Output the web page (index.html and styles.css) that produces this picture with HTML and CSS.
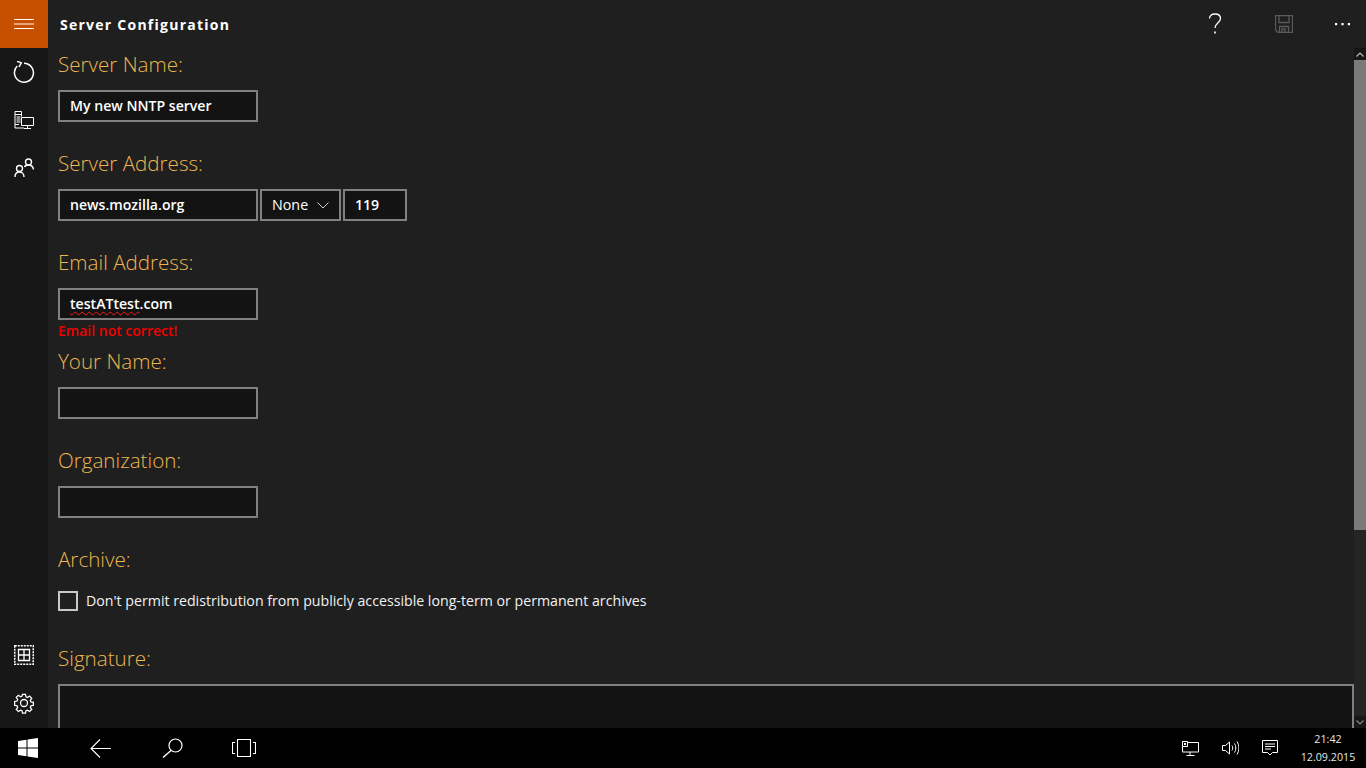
FILE: index.html
```html
<!DOCTYPE html>
<html lang="en">
<head>
<meta charset="utf-8">
<title>Server Configuration</title>
<link rel="stylesheet" href="styles.css">
</head>
<body>
<div class="app">
  <nav class="rail">
    <div class="menu-btn">
      <svg class="ico" width="20" height="12" viewBox="0 0 20 12"><path d="M0 1.500h20M0 6h20M0 10.500h20" stroke="#fff" fill="none"/></svg>
    </div>
    <div class="rail-btn">
      <svg class="ico" width="22" height="22" viewBox="0 0 22 22"><path d="M11 2.200A9.500 9.500 0 1 1 4.200 5M4 .3L8.300 1.800 6 6" stroke="#fff" stroke-width="1.500" fill="none"/></svg>
    </div>
    <div class="rail-btn">
      <svg class="ico" width="20" height="18" viewBox="0 0 20 18"><path d="M1 .5h6.500M1 .5v16.500h9M7.500 .5v5M1 3.500h6.500M1 13.500h4M7.500 6.500h12v8h-12zM13.500 14.500v2.500M10 17.500h7" stroke="#fff" fill="none"/><path d="M2.500 5h4v7h-4z" fill="#fff" opacity=".5"/></svg>
    </div>
    <div class="rail-btn">
      <svg class="ico" width="20" height="20" viewBox="0 0 20 20"><circle cx="14.500" cy="4" r="3" stroke="#fff" stroke-width="1.400" fill="none"/><circle cx="5.500" cy="10.500" r="3" stroke="#fff" stroke-width="1.400" fill="none"/><path d="M1 19c0-3 1.800-5 4.500-5s4.500 2 4.500 5M10.500 9c.6-1.500 2-2 4-2 2.500 0 4.500 1.500 5 4.500" stroke="#fff" stroke-width="1.400" fill="none"/></svg>
    </div>
    <div class="rail-spacer"></div>
    <div class="rail-btn rail-btn-up">
      <svg class="ico" width="20" height="20" viewBox="0 0 20 20"><rect x=".75" y=".75" width="18.500" height="18.500" stroke="#fff" stroke-width="1.500" stroke-dasharray="2 1" fill="none"/><path d="M4.500 4.500h11v11h-11zM10 4.500v11M4.500 10h11" stroke="#fff" stroke-width="1.300" fill="none"/></svg>
    </div>
    <div class="rail-btn rail-btn-up">
      <svg class="ico" width="22" height="22" viewBox="0 0 22 22"><path d="M9.300 1.500h3.400l.5 2.700 1.700.7 2.300-1.600 2.400 2.400-1.600 2.300.7 1.700 2.700.5v3.400l-2.700.5-.7 1.700 1.600 2.300-2.400 2.400-2.300-1.600-1.700.7-.5 2.700H9.300l-.5-2.700-1.700-.7-2.300 1.600-2.400-2.400 1.600-2.300-.7-1.700-2.700-.5V9.300l2.700-.5.7-1.700L2.400 4.800l2.400-2.400 2.300 1.600 1.700-.7z" transform="translate(1.100 1.100) scale(.9)" stroke="#fff" stroke-width="1.400" fill="none"/><circle cx="11" cy="11" r="3.500" stroke="#fff" stroke-width="1.300" fill="none"/></svg>
    </div>
  </nav>

  <div class="page">
    <header class="titlebar">
      <h1 class="title">Server Configuration</h1>
      <div class="actions">
        <span class="action-btn help">
          <svg class="ico" width="14" height="22" viewBox="0 0 14 22"><path d="M1.500 5.500C1.500 3 3.500 1 7 1s5.500 2 5.500 4.500c0 4-5.500 4.500-5.500 9.500" stroke="#fff" stroke-width="1.300" fill="none"/><path d="M6.200 18.500h1.600v2H6.200z" fill="#fff"/></svg>
        </span>
        <span class="action-btn save">
          <svg class="ico" width="18" height="18" viewBox="0 0 18 18"><path d="M.5.500h17v17H3L.5 15zM4 .5v7h10v-7M4.500 17.500v-6h9v6M7 17.500v-3.500h3v3.500" stroke="#5a5a5a" stroke-width="1.300" fill="none"/></svg>
        </span>
        <span class="action-btn more">
          <svg class="ico" width="15" height="3" viewBox="0 0 15 3"><path d="M0 0h2.200v2.200H0zM6.400 0h2.200v2.200H6.400zM12.800 0H15v2.200h-2.200z" fill="#fff"/></svg>
        </span>
      </div>
    </header>

    <div class="body">
      <main class="form">
        <section class="field">
          <h2 class="label">Server Name:</h2>
          <div class="input wide">My new NNTP server</div>
        </section>
        <section class="field">
          <h2 class="label">Server Address:</h2>
          <div class="row">
            <div class="input wide">news.mozilla.org</div>
            <div class="select">None
              <svg class="ico" width="12" height="7" viewBox="0 0 12 7"><path d="M.5.500L6 6 11.500.500" stroke="#ccc" fill="none"/></svg>
            </div>
            <div class="input port">119</div>
          </div>
        </section>
        <section class="field">
          <h2 class="label">Email Address:</h2>
          <div class="input wide"><span class="misspelt">testATtest</span>.com</div>
          <p class="error">Email not correct!</p>
        </section>
        <section class="field">
          <h2 class="label">Your Name:</h2>
          <div class="input wide"></div>
        </section>
        <section class="field">
          <h2 class="label">Organization:</h2>
          <div class="input wide"></div>
        </section>
        <section class="field">
          <h2 class="label">Archive:</h2>
          <div class="check-row">
            <span class="checkbox"></span>
            <span class="check-text">Don't permit redistribution from publicly accessible long-term or permanent archives</span>
          </div>
        </section>
        <section class="field">
          <h2 class="label">Signature:</h2>
          <div class="textarea"></div>
        </section>
      </main>
      <div class="scrollbar">
        <div class="arrow"><svg class="ico" width="8" height="5" viewBox="0 0 8 5"><path d="M.5 4.500L4 1l3.500 3.500" stroke="#bbb" stroke-width="1.200" fill="none"/></svg></div>
        <div class="thumb"></div>
        <div class="track"></div>
        <div class="arrow"><svg class="ico" width="8" height="5" viewBox="0 0 8 5"><path d="M.5.500L4 4 7.500.500" stroke="#888" stroke-width="1.200" fill="none"/></svg></div>
      </div>
    </div>
  </div>
</div>

<footer class="taskbar">
  <div class="task-left">
    <span class="task-btn">
      <svg class="ico" width="20" height="20" viewBox="0 0 20 20"><path d="M0 3l8.500-1.300v7.800H0zM9.500 1.500L20 0v9.500H9.500zM0 10.500h8.500v7.800L0 17zM9.500 10.500H20V20L9.500 18.500z" fill="#fff"/></svg>
    </span>
    <span class="task-btn">
      <svg class="ico" width="21" height="19" viewBox="0 0 21 19"><path d="M10 .5L1 9.500l9 9M1 9.500h20" stroke="#fff" stroke-width="1.100" fill="none"/></svg>
    </span>
    <span class="task-btn">
      <svg class="ico" width="21" height="20" viewBox="0 0 21 20"><circle cx="13.500" cy="7.500" r="6.500" stroke="#fff" stroke-width="1.200" fill="none"/><path d="M9 12.500L1 19.500" stroke="#fff" stroke-width="1.400" fill="none"/></svg>
    </span>
    <span class="task-btn">
      <svg class="ico" width="24" height="18" viewBox="0 0 24 18"><path d="M5.500.500h13v17h-13zM3 3.500H.5v11H3M21 3.500h2.500v11H21" stroke="#fff" stroke-width="1.100" fill="none"/></svg>
    </span>
  </div>
  <div class="task-right">
    <span class="tray-btn">
      <svg class="ico" width="17" height="15" viewBox="0 0 17 15"><path d="M4.500 1.500h12v9.500h-16V6M8 11v3M4.500 14.500h8" stroke="#fff" fill="none"/><path d="M.5.500h5v5h-5z" stroke="#fff" fill="#000"/><path d="M2 2h2v2H2z" fill="#fff"/></svg>
    </span>
    <span class="tray-btn">
      <svg class="ico" width="17" height="14" viewBox="0 0 17 14"><path d="M.5 4.500h3l4-3.500v12l-4-3.500h-3zM10 4.500c1 1.500 1 3.500 0 5M12.500 2.500c1.800 2.500 1.800 6.500 0 9M15 .5c2.500 4 2.500 9 0 13" stroke="#fff" fill="none"/></svg>
    </span>
    <span class="tray-btn">
      <svg class="ico" width="16" height="16" viewBox="0 0 16 16"><path d="M.5.500h15v12h-5L8 15l-2.500-2.500h-5zM3 4h10M3 6.500h10M3 9h6" stroke="#fff" fill="none"/></svg>
    </span>
    <div class="clock"><span>21:42</span><span>12.09.2015</span></div>
  </div>
</footer>
</body>
</html>
```
FILE: styles.css
```css
* { box-sizing: border-box; }
html, body { margin: 0; padding: 0; height: 768px; overflow: hidden; background: #000; }
body { font-family: "Open Sans", "Noto Sans", sans-serif; color: #fff; display: flex; flex-direction: column; }
.ico { display: block; flex: none; }

.app { display: flex; height: 728px; background: #1f1f1f; }

.rail { width: 48px; flex: none; background: #171717; display: flex; flex-direction: column; }
.menu-btn { height: 48px; background: #c75000; display: flex; align-items: center; justify-content: center; }
.rail-btn { height: 48px; display: flex; align-items: center; justify-content: center; }
.rail-btn-up { padding-bottom: 2px; }
.rail-spacer { flex: 1; }

.page { flex: 1; min-width: 0; display: flex; flex-direction: column; }
.titlebar { height: 48px; flex: none; display: flex; align-items: center; justify-content: space-between; padding-left: 12px; }
.title { margin: 0; font-size: 14px; font-weight: 700; letter-spacing: 1.25px; }
.actions { display: flex; }
.action-btn { height: 48px; display: flex; align-items: center; justify-content: center; }
.help { width: 70px; }
.save { width: 68px; }
.more { width: 48px; }

.body { flex: 1; min-height: 0; display: flex; }
.form { flex: 1; min-width: 0; padding-left: 10px; overflow: hidden; }
.field { height: 99px; }
.label { margin: 0; height: 42px; font-size: 20.600px; line-height: 33px; font-weight: 300; color: #edb650; }

.row { display: flex; gap: 2px; }
.input, .select, .textarea { height: 32px; border: 2px solid #808080; background: #131313; }
.input { padding-left: 10px; font-size: 14.100px; font-weight: 600; line-height: 28px; }
.wide { width: 200px; }
.port { width: 64px; }
.select { width: 81px; padding: 0 10px; font-size: 14.300px; line-height: 28px; display: flex; align-items: center; justify-content: space-between; }
.misspelt { text-decoration: underline wavy #ff1a1a 1.200px; text-underline-offset: 2px; }
.error { margin: 0; height: 22px; font-size: 14px; line-height: 21px; font-weight: 600; color: #f00000; }

.check-row { display: flex; align-items: center; gap: 8px; padding-top: 6px; }
.checkbox { width: 20px; height: 20px; flex: none; border: 2px solid #c8c8c8; }
.check-text { font-size: 14.180px; line-height: 20px; white-space: nowrap; color: #f2f2f2; }
.textarea { height: 120px; }

.scrollbar { width: 12px; flex: none; display: flex; flex-direction: column; background: #242424; }
.arrow { height: 12px; flex: none; background: #171717; display: flex; align-items: center; justify-content: center; }
.thumb { height: 470px; flex: none; background: #7a7a7a; }
.track { flex: 1; }

.taskbar { height: 40px; flex: none; background: #000; display: flex; justify-content: space-between; }
.task-left { display: flex; margin-left: -8px; }
.task-btn { width: 72px; display: flex; align-items: center; justify-content: center; }
.task-right { display: flex; align-items: center; }
.tray-btn { width: 40px; height: 40px; display: flex; align-items: center; justify-content: center; }
.clock { width: 76px; display: flex; flex-direction: column; align-items: center; font-size: 10.700px; line-height: 18px; color: #e6e6e6; }
```
